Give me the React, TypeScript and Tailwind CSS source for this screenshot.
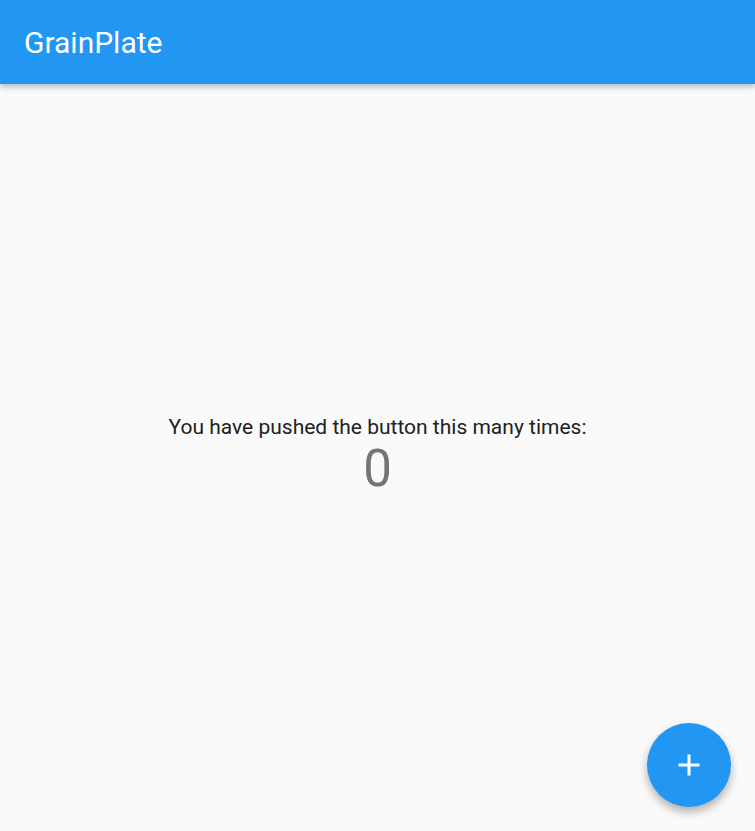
export default function App() {
  return (
    <div
      className="flex h-[831px] w-full flex-col bg-[#fafafa]"
      style={{ fontFamily: 'Roboto, "Noto Sans", sans-serif' }}
    >
      <header className="z-10 flex h-[84px] shrink-0 items-center bg-[#2196f3] px-6 shadow-[0_3px_6px_rgba(0,0,0,0.25)]">
        <h1 className="text-[30px] font-normal text-white">GrainPlate</h1>
      </header>

      <main className="relative flex flex-1 flex-col items-center justify-center pb-[7px]">
        <p className="text-[21px] leading-[30px] text-[#212121]">
          You have pushed the button this many times:
        </p>
        <p className="text-[51px] leading-[54px] text-[#757575]">0</p>

        <button className="absolute bottom-6 right-6 flex h-[84px] w-[84px] items-center justify-center rounded-full bg-[#2196f3] shadow-[0_5px_10px_rgba(0,0,0,0.3)]">
          <svg width="36" height="36" viewBox="0 0 24 24" fill="white">
            <path d="M19 13h-6v6h-2v-6H5v-2h6V5h2v6h6v2z" />
          </svg>
        </button>
      </main>
    </div>
  );
}
